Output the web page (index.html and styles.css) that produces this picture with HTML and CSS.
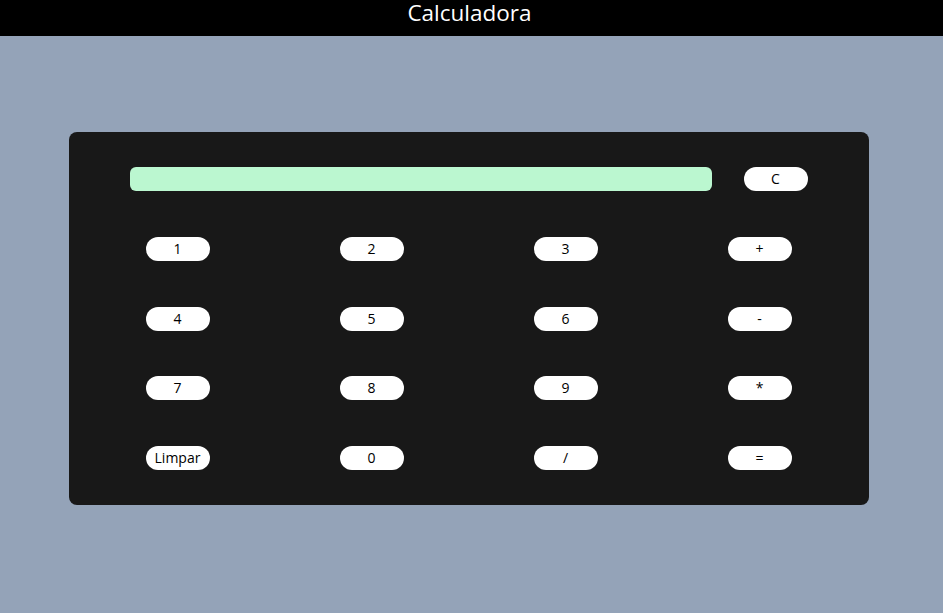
FILE: index.html
```html
<!DOCTYPE html>
<html lang="pt">
<head>
<meta charset="utf-8">
<title>Calculadora</title>
<link rel="stylesheet" href="styles.css">
</head>
<body>
<header class="topbar"><h1 class="title">Calculadora</h1></header>
<main class="page">
  <section class="calc">
    <div class="display-row">
      <div class="display"></div>
      <button class="btn">C</button>
    </div>
    <div class="keys">
      <button class="btn">1</button>
      <button class="btn">2</button>
      <button class="btn">3</button>
      <button class="btn">+</button>
      <button class="btn">4</button>
      <button class="btn">5</button>
      <button class="btn">6</button>
      <button class="btn">-</button>
      <button class="btn">7</button>
      <button class="btn">8</button>
      <button class="btn">9</button>
      <button class="btn">*</button>
      <button class="btn">Limpar</button>
      <button class="btn">0</button>
      <button class="btn">/</button>
      <button class="btn">=</button>
    </div>
  </section>
</main>
</body>
</html>
```
FILE: styles.css
```css
* { box-sizing: border-box; }
html, body { margin: 0; padding: 0; }
body {
  background: #94a3b8;
  font-family: "Open Sans", "Noto Sans", sans-serif;
  min-height: 613px;
}
.topbar {
  background: #000;
  height: 36px;
  display: flex;
  align-items: flex-start;
  justify-content: center;
}
.title {
  margin: 0;
  color: #fff;
  font-size: 22.5px;
  font-weight: 400;
  line-height: 26px;
  padding-right: 4px;
}
.page {
  padding-top: 96px;
  display: flex;
  justify-content: center;
}
.calc {
  width: 800px;
  height: 373px;
  margin-left: -6px;
  background: #181818;
  border-radius: 8px;
  padding: 35px 12px;
  display: flex;
  flex-direction: column;
  gap: 45.75px;
}
.display-row {
  display: flex;
  align-items: center;
  padding-left: 49px;
  gap: 32px;
}
.display {
  width: 582px;
  height: 24px;
  background: #bbf7d0;
  border-radius: 6px;
}
.keys {
  display: grid;
  grid-template-columns: repeat(4, 194px);
  grid-auto-rows: 24px;
  row-gap: 45.75px;
  justify-items: center;
}
.btn {
  width: 64px;
  height: 24px;
  border: none;
  border-radius: 12px;
  background: #fff;
  color: #000;
  font-family: "Open Sans", "Noto Sans", sans-serif;
  font-size: 14px;
  padding: 0;
  line-height: 24px;
}
```
